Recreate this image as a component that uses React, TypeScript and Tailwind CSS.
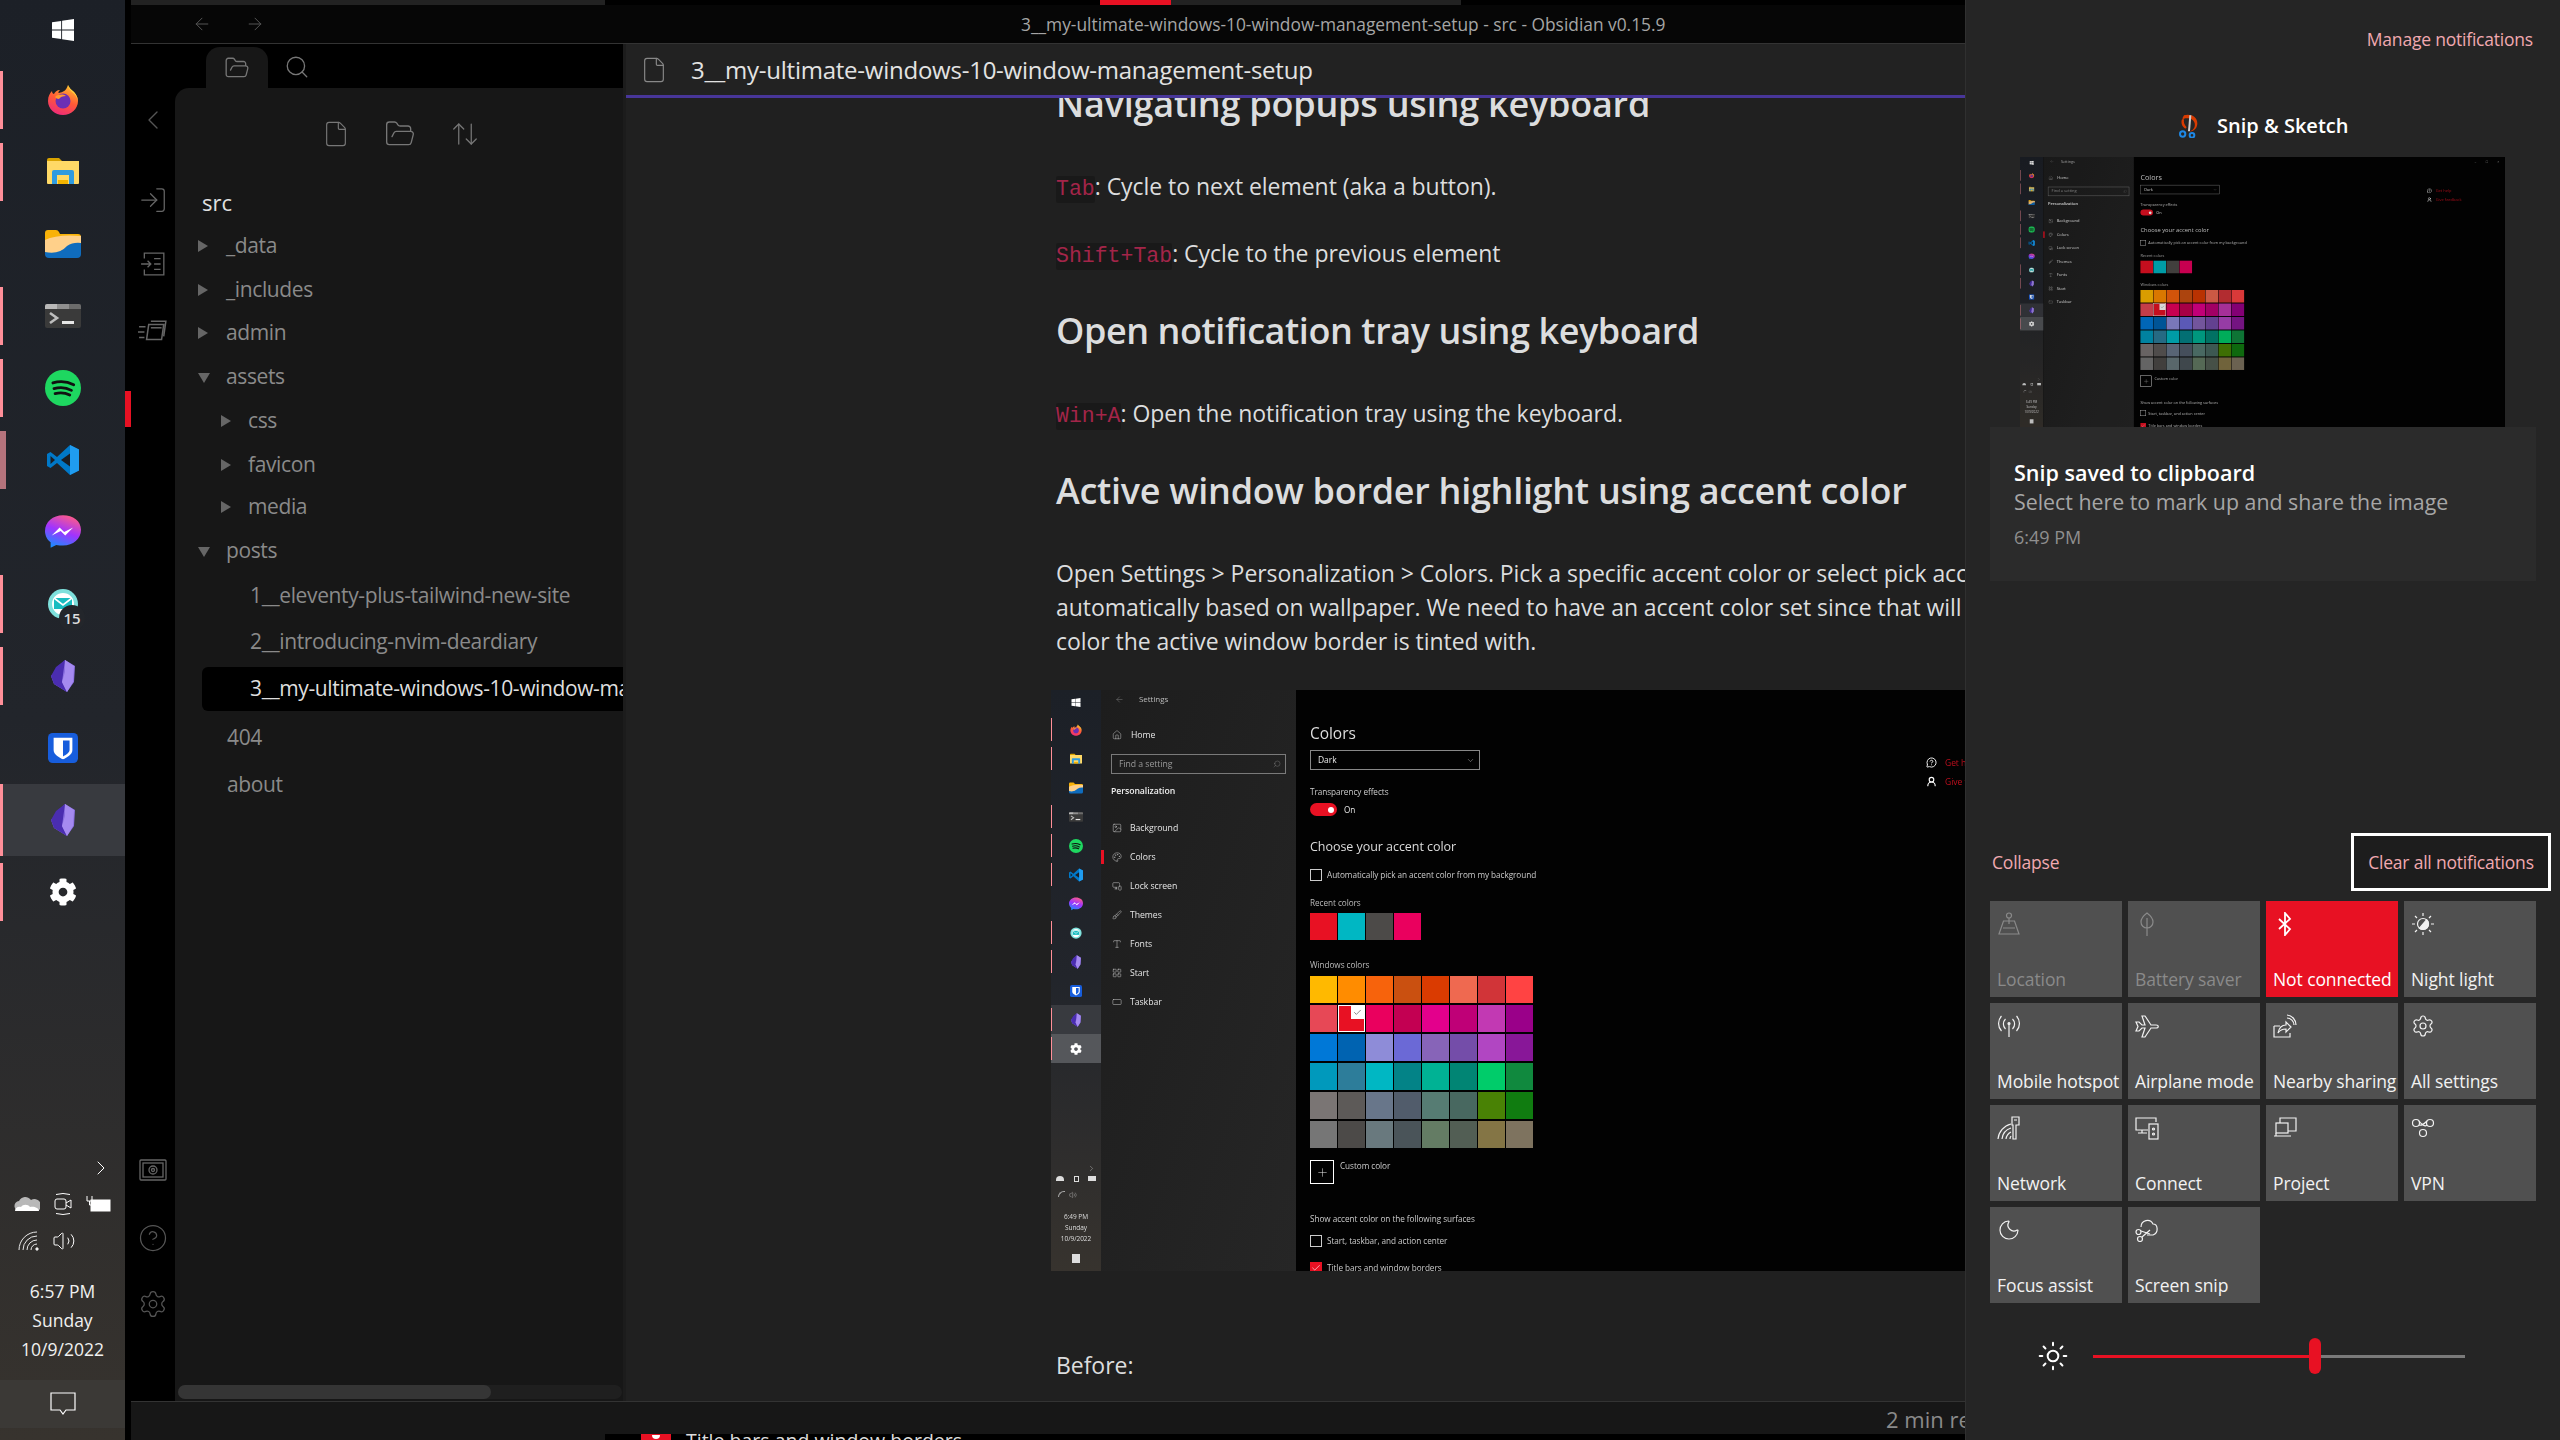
import React from "react"
import {
  ArrowLeft,
  ArrowRight,
  ArrowUpDown,
  Brush,
  Check,
  ChevronDown,
  ChevronLeft,
  ChevronRight,
  CircleHelp,
  File,
  FolderOpen,
  Home,
  Image,
  LayoutGrid,
  LogIn,
  MessageCircleQuestion,
  MonitorSmartphone,
  Moon,
  Palette,
  Plus,
  RectangleHorizontal,
  Search,
  Settings,
  Sun,
  Type,
  UserRound,
  Volume2
} from "lucide-react"
import { FaCog } from "react-icons/fa"

type IconProps = { className?: string }

const WindowsLogo = ({ className }: IconProps) => (
  <svg viewBox="0 0 24 24" className={className} fill="#fff">
    <path d="M0 3.6 10 2.2V11.4H0ZM11 2 24 0V11.4H11ZM0 12.6H10V21.8L0 20.4ZM11 12.6H24V24L11 22Z" />
  </svg>
)

const FirefoxLogo = ({ className }: IconProps) => (
  <svg viewBox="0 0 32 32" className={className}>
    <defs>
      <linearGradient id="ff1" x1="0.7" y1="0" x2="0.3" y2="1">
        <stop offset="0" stopColor="#ffbd2e" />
        <stop offset="0.5" stopColor="#ff5a36" />
        <stop offset="1" stopColor="#ee2a7b" />
      </linearGradient>
    </defs>
    <path d="M21 1c1 3 3 5 6 7 3 3 4 7 4 9 0 8-7 14-15 14S1 25 1 17c0-5 2-8 4-10 0 2 1 3 2 3 1-2 3-4 6-4-2 2-2 3-1 3 4-1 7-2 9-8Z" fill="url(#ff1)" />
    <path d="M21 1c1 3 4 5 6 7 3 3 4 7 4 9-1-4-3-7-6-9-2-2-4-4-4-7Z" fill="#ffd23f" />
    <circle cx="16" cy="17" r="7.5" fill="#6b2fb5" />
    <path d="M8 13c3-3 8-3 11-1-3 0-6 1-7 3-2 0-3-1-4-2Z" fill="#ff9a2e" />
  </svg>
)

const ExplorerLogo = ({ className }: IconProps) => (
  <svg viewBox="0 0 32 28" className={className}>
    <path d="M0 2q0-2 2-2h10l3 3H0Z" fill="#d9a300" />
    <path d="M0 3h32v22q0 1-1 1H1q-1 0-1-1Z" fill="#ffd966" />
    <path d="M5 26V14q0-2 2-2h18q2 0 2 2v12h-5V17H10v9Z" fill="#2f9be0" />
    <rect x="11" y="22" width="10" height="4" fill="#f4b400" />
  </svg>
)

const FilesLogo = ({ className }: IconProps) => (
  <svg viewBox="0 0 36 28" className={className}>
    <path d="M0 3q0-3 3-3h8q2 0 3 2l1 2h18q3 0 3 3v4H0Z" fill="#f9b208" />
    <path d="M0 10q12-6 36-4v12q-14-2-24 6H0Z" fill="#ffd08a" />
    <path d="M0 22q14 3 22-6 6-4 14-3v11q0 4-4 4H4q-4 0-4-4Z" fill="#0f6cbd" />
  </svg>
)

const TerminalLogo = ({ className }: IconProps) => (
  <svg viewBox="0 0 36 24" className={className}>
    <rect width="36" height="24" rx="2" fill="#3a3a3a" />
    <path d="M2 0h10v5H0V2q0-2 2-2Z" fill="#b8b8b8" />
    <rect x="12" width="12" height="5" fill="#8f8f8f" />
    <path d="M24 0h10q2 0 2 2v3H24Z" fill="#6b6b6b" />
    <path d="m5 9 7 5-7 5" stroke="#bdbdbd" strokeWidth="2.6" fill="none" />
    <rect x="17" y="17" width="12" height="3" fill="#e6e6e6" />
  </svg>
)

const SpotifyLogo = ({ className }: IconProps) => (
  <svg viewBox="0 0 32 32" className={className}>
    <circle cx="16" cy="16" r="16" fill="#1ed760" />
    <path d="M7 11.5c6-1.8 13-1.2 18.5 1.6M8 16.5c5-1.4 11-1 15.5 1.6M9 21c4.500-1.100 9-.8 13 1.300" stroke="#111" strokeWidth="2.500" strokeLinecap="round" fill="none" />
  </svg>
)

const VsCodeLogo = ({ className }: IconProps) => (
  <svg viewBox="0 0 32 32" className={className}>
    <path d="M23 1 32 5.500V26.500L23 31 10 19 3.500 24 0 22V10l3.500-2L10 13Z" fill="#0078c8" />
    <path d="M23 1 32 5.500V26.500L23 31Z" fill="#1f9cf0" />
    <path d="M23 9.500 14 16l9 6.500Z" fill="#1a1e25" />
    <path d="M3.500 12 8 16l-4.500 4Z" fill="#1a1e25" />
  </svg>
)

const MessengerLogo = ({ className }: IconProps) => (
  <svg viewBox="0 0 32 32" className={className}>
    <defs>
      <linearGradient id="ms1" x1="0.3" y1="1" x2="0.7" y2="0">
        <stop offset="0" stopColor="#1a8cff" />
        <stop offset="0.5" stopColor="#a033ff" />
        <stop offset="1" stopColor="#ff5c87" />
      </linearGradient>
    </defs>
    <path d="M16 1C7 1 0 7 0 15c0 4 2 8 5 10v5l5-2.500c2 .5 4 .5 6 .5 9 0 16-6 16-14S25 1 16 1Z" fill="url(#ms1)" />
    <path d="m6 19 7-7 4 4 8-4-7 7-4-4Z" fill="#fff" />
  </svg>
)

const MailLogo = ({ className }: IconProps) => (
  <svg viewBox="0 0 32 32" className={className}>
    <circle cx="16" cy="16" r="15" fill="#7ee0dc" />
    <circle cx="16" cy="16" r="11" fill="#ffffff" />
    <path d="M7 10h18v11H7Z" fill="#19bcc0" />
    <path d="m7 10 9 7 9-7" stroke="#fff" strokeWidth="1.600" fill="none" />
  </svg>
)

const ObsidianLogo = ({ className }: IconProps) => (
  <svg viewBox="0 0 24 32" className={className}>
    <path d="M14 0 24 6l-1 16-7 10L3 24 0 16Z" fill="#8a6fe0" />
    <path d="M14 0 5 7 0 16l3 8 13 8-5-10Z" fill="#4a2db0" />
    <path d="M14 0l9 6-1 16-6 10-5-10 3-10Z" fill="#a58af0" />
  </svg>
)

const BitwardenLogo = ({ className }: IconProps) => (
  <svg viewBox="0 0 32 32" className={className}>
    <rect width="32" height="32" rx="5" fill="#175ddc" />
    <path d="M6 5h20v13c0 5-6 8-10 10-4-2-10-5-10-10Z" fill="#fff" />
    <path d="M16 8h7v10c0 3-4 5-7 7Z" fill="#175ddc" />
  </svg>
)

const GearLogo = ({ className }: IconProps) => <FaCog className={className} color="#fff" />

const dockIcons = [
  { Logo: WindowsLogo, size: "w-6 h-6", miniSize: "w-2.5 h-2.5", marker: "none" },
  { Logo: FirefoxLogo, size: "w-8 h-8", miniSize: "w-3 h-3", marker: "pink" },
  { Logo: ExplorerLogo, size: "w-8 h-7", miniSize: "w-3 h-3", marker: "pink" },
  { Logo: FilesLogo, size: "w-9 h-7", miniSize: "w-3.5 h-3", marker: "none" },
  { Logo: TerminalLogo, size: "w-9 h-6", miniSize: "w-3.5 h-2.5", marker: "pink" },
  { Logo: SpotifyLogo, size: "w-9 h-9", miniSize: "w-3.5 h-3.5", marker: "pink" },
  { Logo: VsCodeLogo, size: "w-9 h-8", miniSize: "w-3.5 h-3.5", marker: "wide" },
  { Logo: MessengerLogo, size: "w-9 h-9", miniSize: "w-3.5 h-3.5", marker: "none" },
  { Logo: MailLogo, size: "w-8 h-8", miniSize: "w-3 h-3", marker: "pink" },
  { Logo: ObsidianLogo, size: "w-6 h-8", miniSize: "w-2.5 h-3.5", marker: "pink" },
  { Logo: BitwardenLogo, size: "w-[30px] h-[30px]", miniSize: "w-3 h-3", marker: "none" },
  { Logo: ObsidianLogo, size: "w-6 h-8", miniSize: "w-2.5 h-3.5", marker: "active" },
  { Logo: GearLogo, size: "w-7 h-7", miniSize: "w-3 h-3", marker: "pinkLast" }
]

const Taskbar = () => (
  <div className="flex h-full w-[125px] flex-col bg-gradient-to-b from-[#1c2027] via-[#22252b] to-[#37332e]">
    <div className="mb-[4px] flex h-[60px] items-center justify-center">
      <WindowsLogo className="h-[22px] w-[24px]" />
    </div>
    {dockIcons.slice(1).map((item, i) => (
      <div
        key={i}
        className={`relative flex h-[72px] items-center justify-center ${
          item.marker === "active" ? "bg-[#383a3f]" : ""
        }`}
      >
        {item.marker !== "none" && (
          <div
            className={`absolute left-0 top-[7px] bottom-[7px] ${
              item.marker === "wide" ? "w-[6px] bg-[#b5737c]" : "w-[3px] bg-[#ff8f99]"
            } ${item.marker === "active" ? "!top-0 !bottom-0" : ""}`}
          />
        )}
        <item.Logo className={item.size} />
        {i === 7 && (
          <div className="absolute left-[59px] top-[37px] flex h-[26px] w-[26px] items-center justify-center rounded-full bg-[#23262b] text-[15px] font-semibold text-[#ddd]">
            15
          </div>
        )}
      </div>
    ))}
    <div className="mt-auto flex flex-col items-center pb-[12px] text-white">
      <ChevronRight className="ml-[76px] h-[24px] w-[24px] text-white" strokeWidth={1} />
      <div className="mt-[12px] flex w-full items-center justify-between px-[14px]">
        <svg viewBox="0 0 26 16" className="h-[16px] w-[26px]">
          <path d="M6 15a5 5 0 0 1-1-10 7 7 0 0 1 12-1 6 6 0 0 1 7 11Z" fill="#b8b8b8" />
          <path d="M1 15c0-3 3-5 6-4 2-3 7-3 9 0 4-1 9 1 9 4Z" fill="#fff" />
        </svg>
        <svg viewBox="0 0 24 24" className="h-[24px] w-[24px]" fill="none" stroke="#fff" strokeWidth="1">
          <rect x="4" y="7" width="11" height="10" rx="2" />
          <path d="m15 11 5-3v8l-5-3M5 2.500q7-2 14 0M5 21.500q7 2 14 0" />
        </svg>
        <svg viewBox="0 0 26 18" className="h-[18px] w-[26px]" fill="none" stroke="#fff" strokeWidth="1">
          <rect x="6" y="5" width="19" height="11" fill="#fff" />
          <path d="M2 1v5h5V1M4.500 6v4H8" />
        </svg>
      </div>
      <div className="mt-[13px] flex w-full items-center pl-[18px]">
        <svg viewBox="0 0 22 20" className="h-[20px] w-[22px]" fill="none" stroke="#e8e8e8" strokeWidth="1">
          <path d="M1 19A18 18 0 0 1 19 1M5 19A14 14 0 0 1 19 5M9 19A10 10 0 0 1 19 9M13 19a6 6 0 0 1 6-6" />
          <circle cx="19" cy="18" r="1.200" fill="#fff" />
        </svg>
        <Volume2 className="ml-[12px] h-[24px] w-[24px]" strokeWidth={1} />
      </div>
      <div className="mt-[24px] text-[17.5px] leading-[29px] text-[#f0f0f0]">6:57 PM</div>
      <div className="text-[17.5px] leading-[29px] text-[#f0f0f0]">Sunday</div>
      <div className="text-[17.5px] leading-[29px] text-[#f0f0f0]">10/9/2022</div>
      <div className="mt-[16px] flex h-[48px] w-full items-center justify-center bg-[#3b3936]">
        <svg viewBox="0 0 26 24" className="h-[24px] w-[26px]" fill="none" stroke="#fff" strokeWidth="1.200">
          <path d="M1 1h24v17h-9l-3 4-3-4H1Z" />
        </svg>
      </div>
    </div>
  </div>
)

const RibbonDoc = () => (
  <svg viewBox="0 0 24 24" className="h-[26px] w-[26px]" fill="none" stroke="#666" strokeWidth="1.200">
    <path d="M4 7V2h18v20H4v-5" />
    <path d="M1 12h9M7 9l3 3-3 3M13 7h6M13 12h6M13 17h6" />
  </svg>
)

const RibbonStack = () => (
  <svg viewBox="0 0 28 24" className="h-[26px] w-[30px]" fill="none" stroke="#666" strokeWidth="1.400">
    <path d="M10 6h14l-2 14H8ZM12 3h14l-2 14M1 8h6M0 13h6M1 18h5" />
    <path d="M12 9h10" />
  </svg>
)

const RibbonVault = () => (
  <svg viewBox="0 0 28 24" className="h-[24px] w-[28px]" fill="none" stroke="#666" strokeWidth="1.300">
    <rect x="1" y="1" width="26" height="20" rx="1" />
    <rect x="4" y="4" width="20" height="14" />
    <circle cx="14" cy="11" r="4" />
    <circle cx="14" cy="11" r="1.500" />
  </svg>
)

const Ribbon = () => (
  <div className="flex h-full w-[44px] flex-col items-center bg-black pb-[82px]">
    <ChevronLeft className="mt-[60px] h-[32px] w-[32px] text-[#555]" strokeWidth={1} />
    <LogIn className="mt-[49px] h-[30px] w-[30px] text-[#666]" strokeWidth={1} />
    <div className="mt-[36px]">
      <RibbonDoc />
    </div>
    <div className="mt-[41px]">
      <RibbonStack />
    </div>
    <div className="mt-auto">
      <RibbonVault />
    </div>
    <CircleHelp className="mt-[40px] h-[30px] w-[30px] text-[#555]" strokeWidth={1} />
    <Settings className="mt-[36px] h-[30px] w-[30px] text-[#555]" strokeWidth={1} />
  </div>
)

const treeRows = [
  { label: "_data", pad: "pl-[51px]", arrow: "right", arrowPad: "left-[23px]", h: "h-[44px]" },
  { label: "_includes", pad: "pl-[51px]", arrow: "right", arrowPad: "left-[23px]", h: "h-[43px]" },
  { label: "admin", pad: "pl-[51px]", arrow: "right", arrowPad: "left-[23px]", h: "h-[44px]" },
  { label: "assets", pad: "pl-[51px]", arrow: "down", arrowPad: "left-[23px]", h: "h-[44px]" },
  { label: "css", pad: "pl-[73px]", arrow: "right", arrowPad: "left-[46px]", h: "h-[44px]" },
  { label: "favicon", pad: "pl-[73px]", arrow: "right", arrowPad: "left-[46px]", h: "h-[42px]" },
  { label: "media", pad: "pl-[73px]", arrow: "right", arrowPad: "left-[46px]", h: "h-[44px]" },
  { label: "posts", pad: "pl-[51px]", arrow: "down", arrowPad: "left-[23px]", h: "h-[45px]" },
  { label: "1__eleventy-plus-tailwind-new-site", pad: "pl-[75px]", h: "h-[46px]" },
  { label: "2__introducing-nvim-deardiary", pad: "pl-[75px]", h: "h-[47px]" },
  { label: "3__my-ultimate-windows-10-window-management-setup", pad: "pl-[75px]", h: "h-[49px]", active: true },
  { label: "404", pad: "pl-[52px]", h: "h-[47px]" },
  { label: "about", pad: "pl-[52px]", h: "h-[48px]" }
]

const FileExplorer = () => (
  <div className="flex h-full w-[448px] flex-col bg-black">
    <div className="flex h-[44px] shrink-0 items-end pl-[31px]">
      <div className="relative flex h-[41px] w-[62px] items-center justify-center rounded-t-[14px] bg-[#171717]">
        <FolderOpen className="h-[26px] w-[26px] text-[#777]" strokeWidth={1.200} />
      </div>
      <Search className="ml-[16px] mb-[8px] h-[26px] w-[26px] text-[#777]" strokeWidth={1.200} />
    </div>
    <div className="flex min-h-0 flex-1 flex-col overflow-hidden rounded-tl-[14px] bg-[#171717]">
      <div className="flex h-[60px] shrink-0 items-center justify-center gap-[34px] pt-[32px] pl-[4px] pb-[0px]">
        <File className="h-[32px] w-[28px] text-[#777]" strokeWidth={1} />
        <FolderOpen className="h-[32px] w-[32px] text-[#777]" strokeWidth={1} />
        <ArrowUpDown className="h-[32px] w-[30px] text-[#777]" strokeWidth={1} />
      </div>
      <div className="mt-[32px] flex h-[44px] shrink-0 items-center pl-[27px] text-[22px] text-[#e0e0e0]">src</div>
      <div className="flex-1">
        {treeRows.map(row => (
          <div key={row.label} className={`relative ${row.h} w-[448px] overflow-hidden text-[21px] tracking-[-0.018em] text-[#8a8a8a]`}>
            <div
              className={`flex h-[44px] items-center whitespace-nowrap ${row.pad} ${
                row.active ? "ml-[27px] rounded-l-[6px] bg-black !pl-[48px] text-[#dedede]" : ""
              }`}
            >
              {row.label}
            </div>
            {row.arrow === "right" && (
              <div className={`absolute top-[16px] ${row.arrowPad} h-0 w-0 border-y-[6px] border-l-[10px] border-y-transparent border-l-[#666]`} />
            )}
            {row.arrow === "down" && (
              <div className={`absolute top-[18px] ${row.arrowPad} h-0 w-0 border-x-[6px] border-t-[10px] border-x-transparent border-t-[#666]`} />
            )}
          </div>
        ))}
      </div>
      <div className="mb-[2px] ml-[3px] mr-[1px] h-[14px] shrink-0 rounded-full bg-[#1f1f1f]">
        <div className="h-full w-[313px] rounded-full bg-[#353535]" />
      </div>
    </div>
  </div>
)

const colorRows = [
  ["#ffb900", "#ff8c00", "#f7630c", "#ca5010", "#da3b01", "#ef6950", "#d13438", "#ff4343"],
  ["#e74856", "#e81123", "#ea005e", "#c30052", "#e3008c", "#bf0077", "#c239b3", "#9a0089"],
  ["#0078d7", "#0063b1", "#8e8cd8", "#6b69d6", "#8764b8", "#744da9", "#b146c2", "#881798"],
  ["#0099bc", "#2d7d9a", "#00b7c3", "#038387", "#00b294", "#018574", "#00cc6a", "#10893e"],
  ["#7a7574", "#5d5a58", "#68768a", "#515c6b", "#567c73", "#486860", "#498205", "#107c10"],
  ["#767676", "#4c4a48", "#69797e", "#4a5459", "#647c64", "#525e54", "#847545", "#7e735f"]
]

const settingsNav = [
  { label: "Background", Icon: Image },
  { label: "Colors", Icon: Palette },
  { label: "Lock screen", Icon: MonitorSmartphone },
  { label: "Themes", Icon: Brush },
  { label: "Fonts", Icon: Type },
  { label: "Start", Icon: LayoutGrid },
  { label: "Taskbar", Icon: RectangleHorizontal }
]

const SettingsShot = () => (
  <div className="flex h-[581px] w-[1043px] overflow-hidden bg-black text-[#e6e6e6] blur-[0.35px]">
    <div className="flex h-full w-[50px] shrink-0 flex-col bg-gradient-to-b from-[#1c2027] via-[#22252b] to-[#37332e]">
      <div className="flex h-[25px] items-center justify-center">
        <WindowsLogo className="h-[9px] w-[10px]" />
      </div>
      {dockIcons.slice(1).map((item, i) => (
        <div
          key={i}
          className={`relative flex h-[29px] items-center justify-center ${
            i === 10 ? "bg-[#383a3f]" : i === 11 ? "bg-[#55575b]" : ""
          }`}
        >
          {item.marker !== "none" && <div className="absolute left-0 top-[3px] bottom-[3px] w-[1px] bg-[#ff8f99]" />}
          <item.Logo className={item.miniSize} />
        </div>
      ))}
      <div className="mt-auto flex flex-col items-center pb-[4px] text-[6.5px] leading-[11px] text-[#ddd]">
        <ChevronRight className="ml-[30px] h-[9px] w-[9px]" strokeWidth={1} />
        <div className="mt-[3px] flex w-full justify-between px-[5px]">
          <div className="h-[5px] w-[8px] rounded-t-full bg-[#ddd]" />
          <div className="h-[6px] w-[5px] border border-[#ddd]" />
          <div className="h-[5px] w-[8px] bg-[#ddd]" />
        </div>
        <div className="mt-[9px] flex w-full gap-[4px] pl-[7px]">
          <div className="h-[6px] w-[7px] rounded-tl-full border-l border-t border-[#aaa]" />
          <Volume2 className="h-[8px] w-[8px]" strokeWidth={1} />
        </div>
        <div className="mt-[12px]">6:49 PM</div>
        <div>Sunday</div>
        <div>10/9/2022</div>
        <div className="mt-[10px] mb-[4px] h-[9px] w-[8px] bg-[#ddd]" />
      </div>
    </div>

    <div className="flex h-full w-[195px] shrink-0 flex-col bg-gradient-to-br from-[#1d1d1d] to-[#262626] pl-[10px] pr-[10px] text-[8.7px]">
      <div className="mt-[3px] flex h-[12px] items-center">
        <ArrowLeft className="ml-[4px] h-[9px] w-[9px] text-[#999]" strokeWidth={1} />
        <span className="ml-[15px] text-[8px] text-[#bbb]">Settings</span>
      </div>
      <div className="mt-[24px] flex h-[12px] items-center">
        <Home className="ml-[1px] h-[10px] w-[10px]" strokeWidth={1} />
        <span className="ml-[9px]">Home</span>
      </div>
      <div className="mt-[13px] flex h-[20px] items-center justify-between border border-[#7a7a7a] pl-[7px] pr-[4px] text-[#999]">
        Find a setting
        <Search className="h-[8px] w-[8px] -scale-x-100" strokeWidth={1} />
      </div>
      <div className="mt-[11px] text-[8.7px] leading-[13px] font-semibold text-[#eee]">Personalization</div>
      <div className="mt-[15px]">
        {settingsNav.map(({ label, Icon }) => (
          <div key={label} className="relative flex h-[29px] items-center">
            {label === "Colors" && <div className="absolute -left-[10px] h-[14px] w-[3px] bg-[#e81123]" />}
            <Icon className="ml-[1px] h-[10px] w-[10px] text-[#ccc]" strokeWidth={1.200} />
            <span className="ml-[8px]">{label}</span>
          </div>
        ))}
      </div>
    </div>

    <div className="relative h-full flex-1 bg-[#020202] pl-[14px]">
      <div className="pt-[33px] text-[15.5px] leading-[21px] text-[#ddd]">Colors</div>
      <div className="mt-[6px] flex h-[20px] w-[170px] items-center justify-between border border-[#888] pl-[7px] pr-[4px] text-[8.5px]">
        Dark
        <ChevronDown className="h-[9px] w-[9px]" strokeWidth={1} />
      </div>
      <div className="mt-[16px] text-[8.2px] leading-[12px] text-[#ccc]">Transparency effects</div>
      <div className="mt-[5px] flex h-[13px] items-center">
        <div className="flex h-[13px] w-[27px] items-center justify-end rounded-full bg-[#e81123] pr-[3px]">
          <div className="h-[6px] w-[6px] rounded-full bg-white" />
        </div>
        <span className="ml-[7px] text-[8.2px]">On</span>
      </div>
      <div className="mt-[22px] text-[12.5px] leading-[17px] text-[#ddd]">Choose your accent color</div>
      <div className="mt-[14px] flex h-[12px] items-center text-[8.2px] text-[#ccc]">
        <div className="mr-[5px] h-[12px] w-[12px] border border-[#ccc]" />
        Automatically pick an accent color from my background
      </div>
      <div className="mt-[16px] text-[8.2px] leading-[12px] text-[#bbb]">Recent colors</div>
      <div className="mt-[4px] flex gap-[1px]">
        {["#e81123", "#00b7c3", "#4c4a48", "#ea005e"].map(c => (
          <div key={c} className="h-[27px] w-[27px]" style={{ backgroundColor: c }} />
        ))}
      </div>
      <div className="mt-[19px] text-[8.2px] leading-[12px] text-[#bbb]">Windows colors</div>
      <div className="mt-[5px] flex flex-col gap-[2px]">
        {colorRows.map((row, r) => (
          <div key={r} className="flex gap-[1px]">
            {row.map((c, col) => (
              <div key={c} className="relative h-[27px] w-[27px]" style={{ backgroundColor: c }}>
                {r === 1 && col === 1 && (
                  <div className="absolute inset-0 flex justify-end border border-white">
                    <div className="flex h-[13px] w-[13px] items-center justify-center bg-white">
                      <Check className="h-[9px] w-[9px] text-[#333]" strokeWidth={1.500} />
                    </div>
                  </div>
                )}
              </div>
            ))}
          </div>
        ))}
      </div>
      <div className="mt-[12px] flex items-start">
        <div className="flex h-[24px] w-[24px] items-center justify-center border border-white">
          <Plus className="h-[13px] w-[13px]" strokeWidth={1} />
        </div>
        <span className="ml-[6px] text-[8.2px] leading-[12px] text-[#ccc]">Custom color</span>
      </div>
      <div className="mt-[29px] text-[8.2px] leading-[12px] text-[#ccc]">Show accent color on the following surfaces</div>
      <div className="mt-[10px] flex h-[12px] items-center text-[8.2px] text-[#ccc]">
        <div className="mr-[5px] h-[12px] w-[12px] border border-[#ccc]" />
        Start, taskbar, and action center
      </div>
      <div className="mt-[15px] flex h-[12px] items-center text-[8.2px] text-[#ccc]">
        <div className="mr-[5px] flex h-[12px] w-[12px] items-center justify-center bg-[#e81123]">
          <Check className="h-[10px] w-[10px] text-white" strokeWidth={1.500} />
        </div>
        Title bars and window borders
      </div>
      <div className="absolute left-[630px] top-[63px] text-[8.5px] text-[#c00f1e]">
        <div className="flex h-[19px] items-center gap-[8px]">
          <MessageCircleQuestion className="h-[11px] w-[11px] text-white" strokeWidth={2} />
          Get help
        </div>
        <div className="flex h-[19px] items-center gap-[8px]">
          <UserRound className="h-[11px] w-[11px] text-white" strokeWidth={2.500} />
          Give feedback
        </div>
      </div>
      <div className="absolute right-[12px] top-[4px] flex gap-[20px] text-[8px] text-[#888]">
        <span>–</span>
        <span>□</span>
        <span>×</span>
      </div>
    </div>
  </div>
)

const Code = ({ children }: { children: React.ReactNode }) => (
  <code className="inline-block rounded-[2px] bg-[#191919] font-['Liberation_Mono',monospace] text-[21.5px] leading-[27px] tracking-normal text-[#a32549]">
    {children}
  </code>
)

const Editor = () => (
  <div className="flex h-full min-w-0 flex-1 flex-col overflow-hidden bg-[#202020]">
    <div className="flex h-[51px] shrink-0 items-center bg-[#222]">
      <File className="ml-[14px] h-[28px] w-[28px] text-[#888]" strokeWidth={1} />
      <span className="ml-[23px] text-[24px] font-medium tracking-[-0.01em] text-[#e3e3e3]">
        3__my-ultimate-windows-10-window-management-setup
      </span>
    </div>
    <div className="h-[3px] shrink-0 bg-[#483699]" />
    <div className="min-h-0 flex-1 overflow-hidden whitespace-nowrap pl-[430px] text-[23px] leading-[34px] tracking-[-0.002em] text-[#dcddde]">
      <h2 className="-mt-[18px] h-[48px] text-[36px] leading-[48px] font-semibold tracking-[-0.006em] text-[#dcddde]">
        Navigating popups using keyboard
      </h2>
      <p className="mt-[41px]">
        <Code>Tab</Code>: Cycle to next element (aka a button).
      </p>
      <p className="mt-[33px]">
        <Code>Shift+Tab</Code>: Cycle to the previous element
      </p>
      <h2 className="mt-[37px] h-[48px] text-[36px] leading-[48px] font-semibold tracking-[-0.012em]">
        Open notification tray using keyboard
      </h2>
      <p className="mt-[41px]">
        <Code>Win+A</Code>: Open the notification tray using the keyboard.
      </p>
      <h2 className="mt-[37px] h-[48px] text-[36px] leading-[48px] font-semibold tracking-[-0.008em]">
        Active window border highlight using accent color
      </h2>
      <p className="mt-[41px]">
        Open Settings &gt; Personalization &gt; Colors. Pick a specific accent color or select pick accent color
        <br />
        automatically based on wallpaper. We need to have an accent color set since that will be the
        <br />
        color the active window border is tinted with.
      </p>
      <div className="-ml-[5px] mt-[32px]">
        <SettingsShot />
      </div>
      <p className="mt-[77px]">Before:</p>
    </div>
  </div>
)

const ObsidianWindow = () => (
  <div className="flex h-full min-w-0 flex-1 flex-col">
    <div className="flex h-[5px] shrink-0">
      <div className="w-[474px] bg-[#222]" />
      <div className="w-[495px] bg-black" />
      <div className="w-[71px] bg-[#e81123]" />
      <div className="w-[290px] bg-[#222]" />
    </div>
    <div className="flex h-[39px] shrink-0 items-center border-b border-[#333] bg-[#060606]">
      <ArrowLeft className="ml-[61px] h-[20px] w-[20px] text-[#555]" strokeWidth={1.200} />
      <ArrowRight className="ml-[33px] h-[20px] w-[20px] text-[#555]" strokeWidth={1.200} />
      <span className="ml-[756px] text-[17.35px] text-[#a5a5a5]">
        3__my-ultimate-windows-10-window-management-setup - src - Obsidian v0.15.9
      </span>
    </div>
    <div className="flex min-h-0 flex-1">
      <Ribbon />
      <FileExplorer />
      <div className="h-full w-[3px] bg-[#1c1c1c]" />
      <Editor />
    </div>
    <div className="flex h-[39px] shrink-0 flex-col border-t border-[#333] bg-[#171717]">
      <div className="flex h-[32px] shrink-0 items-center overflow-hidden whitespace-nowrap pl-[1755px] pt-[2px] text-[22px] text-[#8a8a8a]">
        2 min read
      </div>
      <div className="flex h-[6px] shrink-0 overflow-hidden">
        <div className="w-[474px] shrink-0" />
        <div className="flex flex-1 items-start bg-black pl-[36px]">
          <div className="flex h-[6px] w-[30px] justify-center bg-[#e81123]">
            <div className="mt-[1px] h-[4px] w-[8px] rounded-b-full bg-white" />
          </div>
          <span className="ml-[15px] -mt-[6px] text-[19.5px] leading-[26px] text-[#ddd]">Title bars and window borders</span>
        </div>
      </div>
    </div>
  </div>
)

const TileSvg = ({ children }: { children: React.ReactNode }) => (
  <svg viewBox="0 0 24 24" className="h-[24px] w-[24px]" fill="none" stroke="currentColor" strokeWidth="1.200">
    {children}
  </svg>
)

const tiles = [
  {
    label: "Location",
    disabled: true,
    icon: (
      <TileSvg>
        <circle cx="12" cy="3.500" r="2.500" />
        <path d="M12 6v6M6.500 9h11L22 22H2ZM6 16h12" />
      </TileSvg>
    )
  },
  {
    label: "Battery saver",
    disabled: true,
    icon: (
      <TileSvg>
        <path d="M12 1C8 4 6 7 6 10a6 6 0 0 0 12 0c0-3-2-6-6-9ZM12 6v18" />
      </TileSvg>
    )
  },
  {
    label: "Not connected",
    active: true,
    icon: (
      <TileSvg>
        <path d="m6 7 11 10-5 6V1l5 6L6 17" strokeWidth="1.800" />
      </TileSvg>
    )
  },
  {
    label: "Night light",
    icon: (
      <TileSvg>
        <circle cx="12" cy="12" r="5.500" />
        <path d="M12 6.500a5.500 5.500 0 0 1 0 11Z" fill="currentColor" transform="rotate(40 12 12)" />
        <path d="M12 1v3M12 20v3M1 12h3M20 12h3M4 4l2 2M18 18l2 2M4 20l2-2M18 6l2-2" />
      </TileSvg>
    )
  },
  {
    label: "Mobile hotspot",
    icon: (
      <TileSvg>
        <circle cx="12" cy="9.500" r="1" fill="currentColor" />
        <path d="M12 10v13M8.500 5a7 7 0 0 0 0 10M15.500 5a7 7 0 0 1 0 10M4.500 2a11 11 0 0 0 0 15M19.500 2a11 11 0 0 1 0 15" />
      </TileSvg>
    )
  },
  {
    label: "Airplane mode",
    icon: (
      <TileSvg>
        <path d="M1 8h3l3 3h3L7 2h3l6 9h5c3 0 3 3 0 3h-5l-6 9H7l3-9H7l-3 3H1l2-4.500Z" />
      </TileSvg>
    )
  },
  {
    label: "Nearby sharing",
    icon: (
      <TileSvg>
        <path d="M1 12v11h16v-4M1 12h6M5 19c1-5 4-8 8-8V8l5 5-5 5v-3c-3 0-6 1-8 4ZM14 4a7 7 0 0 1 7 7M14 1a10 10 0 0 1 9 10" />
      </TileSvg>
    )
  },
  {
    label: "All settings",
    icon: <Settings className="h-[24px] w-[24px]" strokeWidth={1.200} />
  },
  {
    label: "Network",
    icon: (
      <TileSvg>
        <path d="M1 23A17 17 0 0 1 14 8M5 23a13 13 0 0 1 9-11M9 23a9 9 0 0 1 5-7M13 23a5 5 0 0 1 1-3" />
        <path d="M15 1h7v8h-3v14h-3V9h-1ZM17 4h3" />
      </TileSvg>
    )
  },
  {
    label: "Connect",
    icon: (
      <TileSvg>
        <path d="M13 14H1V2h20v4M7 14v3M3 17h9" />
        <rect x="14" y="8" width="9" height="15" />
        <circle cx="18.500" cy="13" r="1" />
        <circle cx="18.500" cy="18" r="1" />
      </TileSvg>
    )
  },
  {
    label: "Project",
    icon: (
      <TileSvg>
        <path d="M7 7V2h16v13h-8" />
        <rect x="3" y="7" width="12" height="10" />
        <path d="M1 20h17M3 17v3" />
      </TileSvg>
    )
  },
  {
    label: "VPN",
    icon: (
      <TileSvg>
        <circle cx="5" cy="7" r="3.500" />
        <circle cx="19" cy="7" r="3.500" />
        <circle cx="12" cy="17" r="3.500" />
        <path d="M8 9c3 1 5-1 8-4M16 9c-2 2-5 0-8-4" />
      </TileSvg>
    )
  },
  {
    label: "Focus assist",
    icon: <Moon className="h-[24px] w-[24px]" strokeWidth={1.200} />
  },
  {
    label: "Screen snip",
    icon: (
      <TileSvg>
        <path d="M6 9c0-7 9-9 12-3 5 0 6 9 0 11h-6" />
        <circle cx="3.500" cy="14" r="2.500" />
        <circle cx="5" cy="21" r="2.500" />
        <path d="M6 13l9 3M7 19l8-7" />
      </TileSvg>
    )
  }
]

const SnipIcon = () => (
  <svg viewBox="0 0 30 36" className="h-[24px] w-[20px]">
    <path d="M9 2c10-3 20 2 20 12 0 8-6 13-12 12 7-2 9-7 8-12-1-6-9-9-16-7-3 1-3 0-0-5Z" fill="#d83b01" />
    <path d="M6 8c-2 5 0 11 5 14l2-2c-3-3-5-7-4-12Z" fill="#d83b01" />
    <path d="M17 2h3l-2 24h-3Z" fill="#cfcfcf" />
    <circle cx="7" cy="30" r="4" fill="none" stroke="#1e88e5" strokeWidth="3" />
    <circle cx="21" cy="32" r="3.500" fill="none" stroke="#1e88e5" strokeWidth="3" />
  </svg>
)

const ActionCenter = () => (
  <div className="flex h-full w-[595px] shrink-0 flex-col border-l border-[#303030] bg-[#252525] pt-[26px]">
    <div className="flex h-[26px] justify-end pr-[27px] text-[17.5px] leading-[26px] tracking-[-0.012em] text-[#f1a9b0]">
      Manage notifications
    </div>
    <div className="mt-[57px] flex h-[34px] items-center pl-[212px]">
      <SnipIcon />
      <span className="ml-[19px] text-[20px] font-semibold text-white">Snip &amp; Sketch</span>
    </div>
    <div className="mt-[14px] ml-[54px] h-[270px] w-[485px] overflow-hidden bg-black">
      <div className="origin-top-left scale-[0.465] brightness-[0.85]">
        <SettingsShot />
      </div>
    </div>
    <div className="ml-[24px] h-[154px] w-[546px] bg-[#2b2b2b] pl-[24px] pt-[32px]">
      <div className="text-[21.5px] leading-[28px] font-semibold text-white">Snip saved to clipboard</div>
      <div className="text-[21.35px] leading-[30px] text-[#a6a6a6]">Select here to mark up and share the image</div>
      <div className="mt-[7px] text-[18px] leading-[26px] text-[#8f8f8f]">6:49 PM</div>
    </div>
    <div className="mt-[252px] flex h-[58px] items-center justify-between pl-[26px] pr-[9px] text-[17.5px] tracking-[-0.012em] text-[#f1a9b0]">
      <span>Collapse</span>
      <div className="flex h-[58px] w-[200px] items-center justify-center border-[3px] border-white bg-[#1d1d1d]">
        Clear all notifications
      </div>
    </div>
    <div className="mt-[10px] ml-[24px] grid w-[546px] grid-cols-[repeat(4,132px)] gap-[6px]">
      {tiles.map(tile => (
        <div
          key={tile.label}
          className={`flex h-[96px] flex-col justify-between overflow-hidden whitespace-nowrap pl-[7px] pt-[11px] pb-[6px] text-[17.5px] leading-[24px] tracking-[-0.005em] ${
            tile.active ? "bg-[#e81123] text-white" : "bg-[#505050]"
          } ${tile.disabled ? "text-[#8a8a8a]" : "text-[#f2f2f2]"}`}
        >
          {tile.icon}
          <span>{tile.label}</span>
        </div>
      ))}
    </div>
    <div className="mt-[35px] flex h-[36px] items-center pl-[71px]">
      <Sun className="h-[32px] w-[32px] text-white" strokeWidth={1.500} />
      <div className="ml-[24px] flex h-[36px] w-[372px] items-center">
        <div className="h-[3px] w-[216px] bg-[#e81123]" />
        <div className="h-[36px] w-[12px] rounded-full bg-[#e81123]" />
        <div className="h-[3px] flex-1 bg-[#7a7a7a]" />
      </div>
    </div>
  </div>
)

export default function App() {
  return (
    <div className="flex h-[1440px] w-[2560px] overflow-hidden bg-black font-['Open_Sans',sans-serif]">
      <Taskbar />
      <div className="relative h-full w-[6px] shrink-0 bg-black">
        <div className="absolute top-[391px] h-[36px] w-[6px] bg-[#e81123]" />
      </div>
      <ObsidianWindow />
      <ActionCenter />
    </div>
  )
}
